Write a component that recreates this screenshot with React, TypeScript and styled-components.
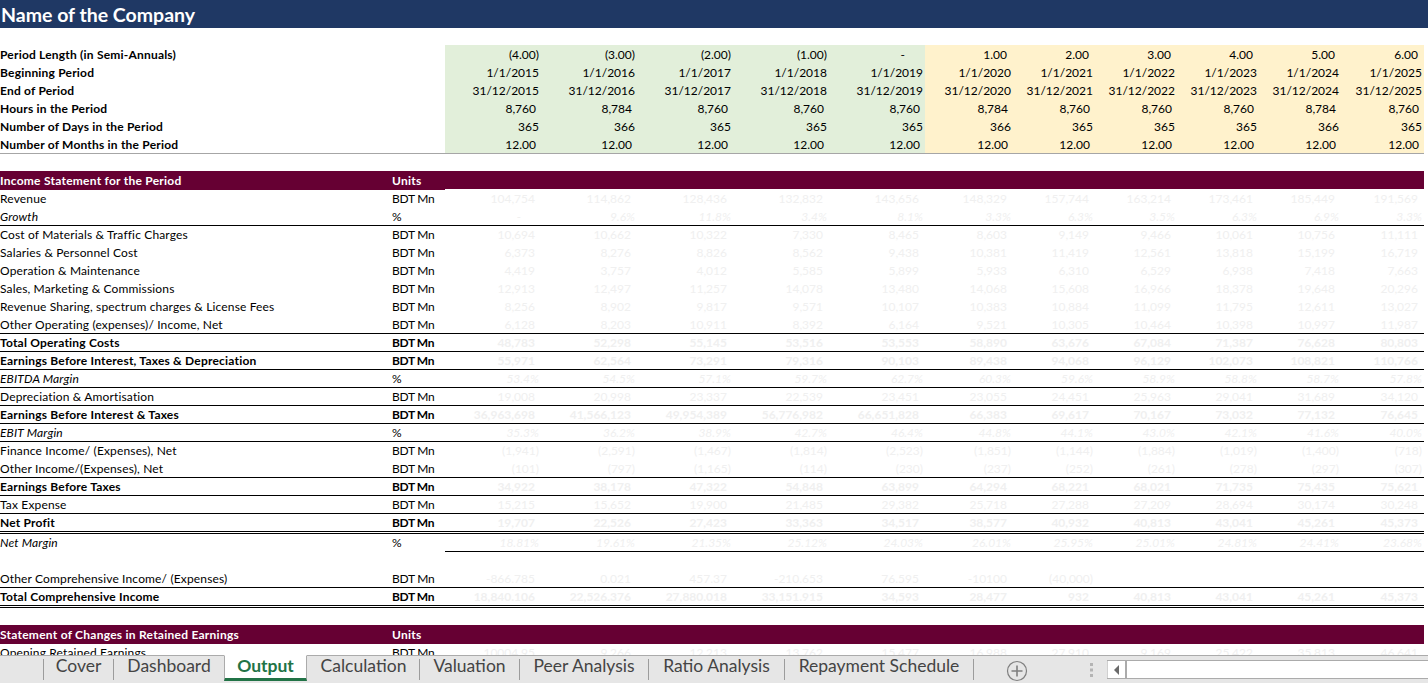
import React from "react";
import styled, { createGlobalStyle } from "styled-components";

const GlobalStyle = createGlobalStyle`
  html, body {
    margin: 0;
    padding: 0;
    background: #fff;
  }
  body {
    font-family: "Lato", "Open Sans", sans-serif;
    font-size: 12px;
    color: #000;
  }
`;

const Page = styled.div`
  width: 1428px;
  height: 683px;
  display: flex;
  flex-direction: column;
  overflow: hidden;
`;

const Sheet = styled.div`
  height: 655px;
  overflow: hidden;
  background: #fff;
`;

const TitleBar = styled.div`
  height: 28px;
  background: #1f3864;
  color: #fff;
  font-size: 19.5px;
  font-weight: 700;
  line-height: 30px;
  padding-left: 1px;
  margin-bottom: 17px;
`;

const COLUMNS = "392px 53px repeat(5, 96px) 88px repeat(4, 82px) 83px";

const PeriodBlock = styled.div`
  width: 1424px;
  border-bottom: 1px solid #a6a6a6;
  margin-bottom: 17px;
`;

const Row = styled.div<{ $line?: "single" | "double"; $tall?: boolean }>`
  display: grid;
  grid-template-columns: ${COLUMNS};
  grid-template-rows: 18px;
  width: 1424px;
  box-sizing: border-box;
  height: ${({ $tall }) => ($tall ? 20 : 18)}px;
  line-height: 18px;
  border-bottom: ${({ $line }) =>
    $line === "double"
      ? "3px double #000"
      : $line === "single"
        ? "1px solid #000"
        : "none"};
`;

const Label = styled.div<{ $bold?: boolean; $italic?: boolean; $period?: boolean }>`
  white-space: nowrap;
  padding-top: ${({ $period }) => ($period ? 1 : 0)}px;
  letter-spacing: ${({ $bold }) => ($bold ? 0.2 : 0.15)}px;
  font-weight: ${({ $bold }) => ($bold ? 700 : 400)};
  font-style: ${({ $italic }) => ($italic ? "italic" : "normal")};
`;

const Unit = styled.div<{ $bold?: boolean }>`
  white-space: nowrap;
  letter-spacing: ${({ $bold }) => ($bold ? -0.4 : -0.25)}px;
  font-weight: ${({ $bold }) => ($bold ? 700 : 400)};
`;

const Value = styled.div<{
  $bg?: string;
  $pad: number;
  $bold?: boolean;
  $italic?: boolean;
  $faint?: boolean;
  $underline?: boolean;
  $period?: boolean;
}>`
  box-sizing: border-box;
  height: 18px;
  text-align: right;
  white-space: nowrap;
  padding-top: ${({ $period }) => ($period ? 1 : 0)}px;
  padding-right: ${({ $pad }) => $pad}px;
  background: ${({ $bg }) => $bg ?? "transparent"};
  color: ${({ $faint }) => ($faint ? "#f0f0f0" : "#000")};
  font-weight: ${({ $bold }) => ($bold ? 700 : 400)};
  font-style: ${({ $italic }) => ($italic ? "italic" : "normal")};
  border-bottom: ${({ $underline }) => ($underline ? "1px solid #000" : "none")};
`;

const HeaderRow = styled.div`
  display: grid;
  grid-template-columns: 392px 53px 1fr;
  width: 1424px;
  height: 19px;
`;

const HeaderCell = styled.div`
  height: 19px;
  line-height: 19px;
  background: #660033;
  color: #fff;
  letter-spacing: 0.25px;
  font-weight: 700;
`;

const HeaderFill = styled.div<{ $short?: boolean }>`
  height: ${({ $short }) => ($short ? 18 : 19)}px;
  background: #660033;
`;

const Gap = styled.div<{ $h: number }>`
  height: ${({ $h }) => $h}px;
`;

const TabBar = styled.div`
  flex: 1;
  display: flex;
  align-items: flex-start;
  box-sizing: border-box;
  border-top: 1px solid #ababab;
  background: #e6e6e6;
  padding-left: 43px;
  color: #444;
  font-size: 17.5px;
`;

const Tab = styled.div<{ $w: number; $end?: boolean; $noSep?: boolean }>`
  box-sizing: border-box;
  width: ${({ $w }) => $w}px;
  height: 21px;
  margin-top: 3px;
  line-height: 14px;
  text-align: center;
  border-left: 1px solid ${({ $noSep }) => ($noSep ? "transparent" : "#9c9c9c")};
  border-right: ${({ $end }) => ($end ? "1px solid #9c9c9c" : "none")};
`;

const ActiveTab = styled.div<{ $w: number }>`
  box-sizing: border-box;
  width: ${({ $w }) => $w}px;
  height: 26px;
  margin-top: -1px;
  line-height: 19px;
  text-align: center;
  background: #fff;
  color: #217346;
  font-weight: 700;
  border-top: 1px solid #fff;
  border-left: 1px solid #ababab;
  border-right: 1px solid #ababab;
  border-bottom: 3px solid #217346;
`;

const AddSheet = styled.div`
  display: flex;
  margin: 4px 0 0 32px;
`;

const Grip = styled.div`
  display: flex;
  margin: 7px 0 0 62px;
`;

const ScrollBar = styled.div`
  flex: 1;
  display: flex;
  height: 19px;
  margin: 4px 0 0 14px;
  box-sizing: border-box;
  background: #fff;
  border-top: 1px solid #ababab;
  border-bottom: 1px solid #ababab;
`;

const ScrollButton = styled.div`
  box-sizing: border-box;
  width: 20px;
  display: flex;
  align-items: center;
  justify-content: center;
  border-left: 1px solid #d0d0d0;
  border-right: 2px solid #ababab;
`;

const GREEN = "#e2efda";
const YELLOW = "#fff2cc";

const periodRows: { label: string; values: string[]; pad: number }[] = [
  {
    label: "Period Length (in Semi-Annuals)",
    values: ["(4.00)", "(3.00)", "(2.00)", "(1.00)", "-", "1.00", "2.00", "3.00", "4.00", "5.00", "6.00"],
    pad: 6,
  },
  {
    label: "Beginning Period",
    values: ["1/1/2015", "1/1/2016", "1/1/2017", "1/1/2018", "1/1/2019", "1/1/2020", "1/1/2021", "1/1/2022", "1/1/2023", "1/1/2024", "1/1/2025"],
    pad: 2,
  },
  {
    label: "End of Period",
    values: ["31/12/2015", "31/12/2016", "31/12/2017", "31/12/2018", "31/12/2019", "31/12/2020", "31/12/2021", "31/12/2022", "31/12/2023", "31/12/2024", "31/12/2025"],
    pad: 2,
  },
  {
    label: "Hours in the Period",
    values: ["8,760", "8,784", "8,760", "8,760", "8,760", "8,784", "8,760", "8,760", "8,760", "8,784", "8,760"],
    pad: 5,
  },
  {
    label: "Number of Days in the Period",
    values: ["365", "366", "365", "365", "365", "366", "365", "365", "365", "366", "365"],
    pad: 2,
  },
  {
    label: "Number of Months in the Period",
    values: ["12.00", "12.00", "12.00", "12.00", "12.00", "12.00", "12.00", "12.00", "12.00", "12.00", "12.00"],
    pad: 5,
  },
];

type LineRow = {
  label: string;
  unit: string;
  values: string[];
  bold?: boolean;
  italic?: boolean;
  line?: "single" | "double";
  tall?: boolean;
  underline?: boolean;
};

const M = "BDT Mn";

const incomeRows: LineRow[] = [
  { label: "Revenue", unit: M, values: ["104,754", "114,862", "128,436", "132,832", "143,656", "148,329", "157,744", "163,214", "173,461", "185,449", "191,569"] },
  { label: "Growth", unit: "%", italic: true, line: "single", values: ["-", "9.6%", "11.8%", "3.4%", "8.1%", "3.3%", "6.3%", "3.5%", "6.3%", "6.9%", "3.3%"] },
  { label: "Cost of Materials & Traffic Charges", unit: M, values: ["10,694", "10,662", "10,322", "7,330", "8,465", "8,603", "9,149", "9,466", "10,061", "10,756", "11,111"] },
  { label: "Salaries & Personnel Cost", unit: M, values: ["6,373", "8,276", "8,826", "8,562", "9,438", "10,381", "11,419", "12,561", "13,818", "15,199", "16,719"] },
  { label: "Operation & Maintenance", unit: M, values: ["4,419", "3,757", "4,012", "5,585", "5,899", "5,933", "6,310", "6,529", "6,938", "7,418", "7,663"] },
  { label: "Sales, Marketing & Commissions", unit: M, values: ["12,913", "12,497", "11,257", "14,078", "13,480", "14,068", "15,608", "16,966", "18,378", "19,648", "20,296"] },
  { label: "Revenue Sharing, spectrum charges & License Fees", unit: M, values: ["8,256", "8,902", "9,817", "9,571", "10,107", "10,383", "10,884", "11,099", "11,795", "12,611", "13,027"] },
  { label: "Other Operating (expenses)/ Income, Net", unit: M, line: "single", values: ["6,128", "8,203", "10,911", "8,392", "6,164", "9,521", "10,305", "10,464", "10,398", "10,997", "11,987"] },
  { label: "Total Operating Costs", unit: M, bold: true, line: "single", values: ["48,783", "52,298", "55,145", "53,516", "53,553", "58,890", "63,676", "67,084", "71,387", "76,628", "80,803"] },
  { label: "Earnings Before Interest, Taxes & Depreciation", unit: M, bold: true, line: "single", values: ["55,971", "62,564", "73,291", "79,316", "90,103", "89,438", "94,068", "96,129", "102,073", "108,821", "110,766"] },
  { label: "EBITDA Margin", unit: "%", italic: true, line: "single", values: ["53.4%", "54.5%", "57.1%", "59.7%", "62.7%", "60.3%", "59.6%", "58.9%", "58.8%", "58.7%", "57.8%"] },
  { label: "Depreciation & Amortisation", unit: M, line: "single", values: ["19,008", "20,998", "23,337", "22,539", "23,451", "23,055", "24,451", "25,963", "29,041", "31,689", "34,120"] },
  { label: "Earnings Before Interest & Taxes", unit: M, bold: true, line: "single", values: ["36,963,698", "41,566,123", "49,954,389", "56,776,982", "66,651,828", "66,383", "69,617", "70,167", "73,032", "77,132", "76,645"] },
  { label: "EBIT Margin", unit: "%", italic: true, line: "single", values: ["35.3%", "36.2%", "38.9%", "42.7%", "46.4%", "44.8%", "44.1%", "43.0%", "42.1%", "41.6%", "40.0%"] },
  { label: "Finance Income/ (Expenses), Net", unit: M, values: ["(1,941)", "(2,591)", "(1,467)", "(1,814)", "(2,523)", "(1,851)", "(1,144)", "(1,884)", "(1,019)", "(1,400)", "(718)"] },
  { label: "Other Income/(Expenses), Net", unit: M, line: "single", values: ["(101)", "(797)", "(1,165)", "(114)", "(230)", "(237)", "(252)", "(261)", "(278)", "(297)", "(307)"] },
  { label: "Earnings Before Taxes", unit: M, bold: true, line: "single", values: ["34,922", "38,178", "47,322", "54,848", "63,899", "64,294", "68,221", "68,021", "71,735", "75,435", "75,621"] },
  { label: "Tax Expense", unit: M, line: "single", values: ["15,215", "15,652", "19,900", "21,485", "29,382", "25,718", "27,288", "27,209", "28,694", "30,174", "30,248"] },
  { label: "Net Profit", unit: M, bold: true, line: "double", tall: true, values: ["19,707", "22,526", "27,423", "33,363", "34,517", "38,577", "40,932", "40,813", "43,041", "45,261", "45,373"] },
  { label: "Net Margin", unit: "%", italic: true, underline: true, values: ["18.81%", "19.61%", "21.35%", "25.12%", "24.03%", "26.01%", "25.95%", "25.01%", "24.81%", "24.41%", "23.68%"] },
];

const comprehensiveRows: LineRow[] = [
  { label: "Other Comprehensive Income/ (Expenses)", unit: M, line: "single", values: ["-866.785", "0.021", "457.37", "-210.653", "76.595", "-10100", "(40,000)", "", "", "", ""] },
  { label: "Total Comprehensive Income", unit: M, bold: true, line: "double", tall: true, values: ["18,840.106", "22,526.376", "27,880.018", "33,151.915", "34,593", "28,477", "932", "40,813", "43,041", "45,261", "45,373"] },
];

const openingRow: LineRow = {
  label: "Opening Retained Earnings",
  unit: M,
  values: ["10004.95", "9,266", "12,213", "13,762", "15,477", "16,988", "27,910", "9,169", "25,422", "35,813", "46,641"],
};

// accounting formats keep room for a closing bracket, so plain numbers sit further in
const padFor = (value: string) => {
  if (value === "-") return 20;
  if (value.endsWith(")") || value.endsWith("%")) return 2;
  return 6;
};

const LineItem: React.FC<{ row: LineRow }> = ({ row }) => (
  <Row $line={row.line} $tall={row.tall}>
    <Label $bold={row.bold} $italic={row.italic}>
      {row.label}
    </Label>
    <Unit $bold={row.bold}>{row.unit}</Unit>
    {row.values.map((value, i) => (
      <Value
        key={i}
        $faint
        $pad={padFor(value)}
        $bold={row.bold}
        $italic={row.italic}
        $underline={row.underline}
      >
        {value}
      </Value>
    ))}
  </Row>
);

const tabs = [
  { name: "Cover", w: 70 },
  { name: "Dashboard", w: 111 },
  { name: "Output", w: 83, active: true },
  { name: "Calculation", w: 112, noSep: true },
  { name: "Valuation", w: 100 },
  { name: "Peer Analysis", w: 129 },
  { name: "Ratio Analysis", w: 136 },
  { name: "Repayment Schedule", w: 190, end: true },
];

const App: React.FC = () => (
  <Page>
    <GlobalStyle />
    <Sheet>
      <TitleBar>Name of the Company</TitleBar>
      <PeriodBlock>
        {periodRows.map((row) => (
          <Row key={row.label}>
            <Label $bold $period>
              {row.label}
            </Label>
            <div />
            {row.values.map((value, i) => (
              <Value
                key={i}
                $period
                $bg={i < 5 ? GREEN : YELLOW}
                $pad={value === "-" ? 20 : value.startsWith("(") ? 2 : row.pad}
              >
                {value}
              </Value>
            ))}
          </Row>
        ))}
      </PeriodBlock>
      <HeaderRow>
        <HeaderCell>Income Statement for the Period</HeaderCell>
        <HeaderCell>Units</HeaderCell>
        <HeaderFill $short />
      </HeaderRow>
      {incomeRows.map((row) => (
        <LineItem key={row.label} row={row} />
      ))}
      <Gap $h={18} />
      {comprehensiveRows.map((row) => (
        <LineItem key={row.label} row={row} />
      ))}
      <Gap $h={17} />
      <HeaderRow>
        <HeaderCell>Statement of Changes in Retained Earnings</HeaderCell>
        <HeaderCell>Units</HeaderCell>
        <HeaderFill />
      </HeaderRow>
      <LineItem row={openingRow} />
    </Sheet>
    <TabBar>
      {tabs.map((tab) =>
        tab.active ? (
          <ActiveTab key={tab.name} $w={tab.w}>
            {tab.name}
          </ActiveTab>
        ) : (
          <Tab key={tab.name} $w={tab.w} $end={tab.end} $noSep={tab.noSep}>
            {tab.name}
          </Tab>
        )
      )}
      <AddSheet>
        <svg width="22" height="22" viewBox="0 0 22 22" fill="none" stroke="#7f7f7f">
          <circle cx="11" cy="11" r="9.5" strokeWidth="1.2" />
          <path d="M11 5.5v11M5.5 11h11" strokeWidth="1.6" />
        </svg>
      </AddSheet>
      <Grip>
        <svg width="3" height="14" viewBox="0 0 3 14" fill="#b4b4b4">
          <rect y="0" width="3" height="3" />
          <rect y="5.5" width="3" height="3" />
          <rect y="11" width="3" height="3" />
        </svg>
      </Grip>
      <ScrollBar>
        <ScrollButton>
          <svg width="6" height="10" viewBox="0 0 6 10" fill="#6a6a6a">
            <path d="M5 0v10L0 5z" />
          </svg>
        </ScrollButton>
      </ScrollBar>
    </TabBar>
  </Page>
);

export default App;
